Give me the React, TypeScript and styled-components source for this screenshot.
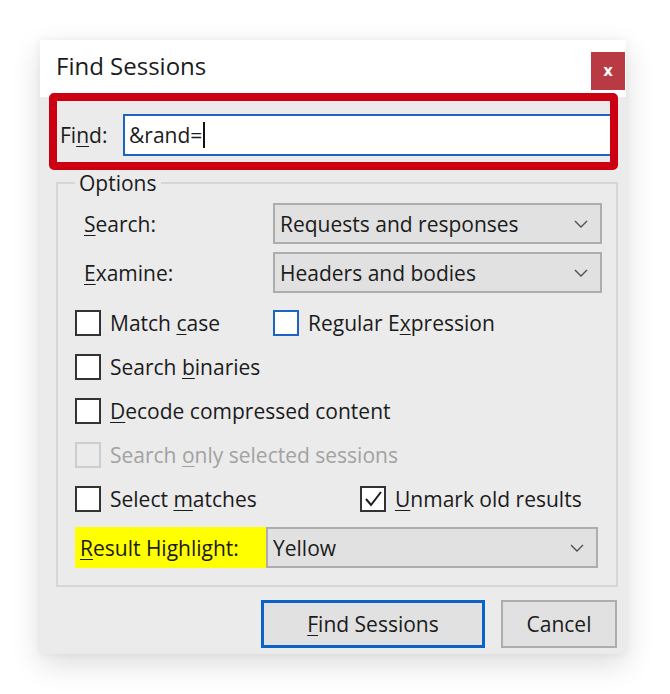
import React from 'react'
import styled, { createGlobalStyle } from 'styled-components'

const GlobalStyle = createGlobalStyle`
    html, body {
        margin: 0;
        padding: 0;
        background: #ffffff;
    }
    body {
        font-family: "Open Sans", "Noto Sans", sans-serif;
        color: #1b1b1b;
    }
`

const Chevron = () => (
    <svg width="14" height="8" viewBox="0 0 14 8">
        <polyline points="1,1 7,7 13,1" fill="none" stroke="#505050" strokeWidth="1.4" />
    </svg>
)

const Check = () => (
    <svg width="22" height="22" viewBox="0 0 22 22">
        <polyline points="4,11 9,17 19,4" fill="none" stroke="#1b1b1b" strokeWidth="2" />
    </svg>
)

const Select: React.FC<{ value: string; trim?: boolean }> = ({ value, trim }) => (
    <SelectBox $trim={trim}>
        <span>{value}</span>
        <Chevron />
    </SelectBox>
)

const CheckItem: React.FC<{
    checked?: boolean
    focused?: boolean
    disabled?: boolean
    children: React.ReactNode
}> = ({ checked, focused, disabled, children }) => (
    <CheckLabel $disabled={disabled}>
        <Box $focused={focused} $disabled={disabled}>
            {checked && <Check />}
        </Box>
        <span>{children}</span>
    </CheckLabel>
)

const App: React.FC = () => {
    return (
        <Page>
            <GlobalStyle />
            <Dialog>
                <TitleBar>
                    <Title>Find Sessions</Title>
                    <CloseButton>x</CloseButton>
                </TitleBar>

                <FindBox>
                    <FindLabel>Fi<U>n</U>d:</FindLabel>
                    <TextField>
                        &amp;rand=
                        <Caret />
                    </TextField>
                </FindBox>

                <Options>
                    <Legend>Options</Legend>

                    <Fields>
                        <FieldRow>
                            <FieldLabel><U>S</U>earch:</FieldLabel>
                            <Select value="Requests and responses" />
                        </FieldRow>
                        <FieldRow>
                            <FieldLabel><U>E</U>xamine:</FieldLabel>
                            <Select value="Headers and bodies" />
                        </FieldRow>
                    </Fields>

                    <Checks>
                        <CheckRow $split={198}>
                            <CheckItem>Match <U>c</U>ase</CheckItem>
                            <CheckItem focused>Regular E<U>x</U>pression</CheckItem>
                        </CheckRow>
                        <CheckRow>
                            <CheckItem>Search <U>b</U>inaries</CheckItem>
                        </CheckRow>
                        <CheckRow>
                            <CheckItem><U>D</U>ecode compressed content</CheckItem>
                        </CheckRow>
                        <CheckRow>
                            <CheckItem disabled>Search <U>o</U>nly selected sessions</CheckItem>
                        </CheckRow>
                        <CheckRow $split={285}>
                            <CheckItem>Select <U>m</U>atches</CheckItem>
                            <CheckItem checked><U>U</U>nmark old results</CheckItem>
                        </CheckRow>
                    </Checks>

                    <ResultRow>
                        <Highlight><U>R</U>esult Highlight:</Highlight>
                        <Select value="Yellow" trim />
                    </ResultRow>
                </Options>

                <Buttons>
                    <Button $primary><U>F</U>ind Sessions</Button>
                    <Button>Cancel</Button>
                </Buttons>
            </Dialog>
        </Page>
    )
}

export default App

const Page = styled.div`
    padding: 40px 0 40px 40px;
`

const Dialog = styled.div`
    width: 586px;
    height: 614px;
    box-sizing: border-box;
    background: #ebebeb;
    display: flex;
    flex-direction: column;
    box-shadow: 0 10px 28px rgba(0, 0, 0, 0.14), 0 0 8px rgba(0, 0, 0, 0.05);
`

const TitleBar = styled.div`
    height: 57px;
    background: #ffffff;
    display: flex;
    justify-content: space-between;
    align-items: flex-start;
    padding-left: 16px;
`

const Title = styled.div`
    font-size: 24px;
    line-height: 30px;
    margin-top: 11px;
    color: #1b1b1b;
`

const CloseButton = styled.div`
    width: 34px;
    height: 38px;
    margin: 12px 1px 0 0;
    background: #b83a42;
    color: #ffffff;
    font-family: "DejaVu Sans", sans-serif;
    font-weight: bold;
    font-size: 15px;
    display: flex;
    align-items: center;
    justify-content: center;
`

const U = styled.span`
    text-decoration: underline;
    text-underline-offset: 3px;
    text-decoration-thickness: 1px;
`

const FindBox = styled.div`
    margin: -4px 8px 0 9px;
    border: 8px solid #cc0012;
    border-radius: 5px;
    background: #ebebeb;
    display: flex;
    align-items: center;
    padding: 13px 0 6px 3px;
`

const FindLabel = styled.div`
    width: 63px;
    font-size: 21px;
`

const TextField = styled.div`
    flex: 1;
    height: 42px;
    box-sizing: border-box;
    border: 2px solid #1d63c0;
    border-right: none;
    background: #ffffff;
    display: flex;
    align-items: center;
    padding-left: 4px;
    font-size: 21px;
`

const Caret = styled.span`
    width: 2px;
    height: 26px;
    margin-left: 1px;
    background: #111111;
`

const Options = styled.fieldset`
    margin: 0 8px 0 16px;
    border: 2px solid #d6d6d6;
    padding: 7px 14px 18px 17px;
    min-width: 0;
    display: flex;
    flex-direction: column;
`

const Legend = styled.legend`
    margin-left: 0;
    padding: 0 4px;
    font-size: 21px;
    line-height: 26px;
`

const Fields = styled.div`
    display: flex;
    flex-direction: column;
    gap: 8px;
`

const FieldRow = styled.div`
    display: grid;
    grid-template-columns: 198px 1fr;
    align-items: center;
`

const FieldLabel = styled.div`
    padding-left: 9px;
    font-size: 21px;
`

const SelectBox = styled.div<{ $trim?: boolean }>`
    height: 41px;
    box-sizing: border-box;
    margin-right: ${p => (p.$trim ? '4px' : '0')};
    border: 2px solid #adadad;
    background: #e1e1e1;
    display: flex;
    align-items: center;
    justify-content: space-between;
    padding: 0 12px 0 5px;
    font-size: 21px;
`

const Checks = styled.div`
    display: flex;
    flex-direction: column;
    gap: 18px;
    margin-top: 17px;
`

const CheckRow = styled.div<{ $split?: number }>`
    display: grid;
    grid-template-columns: ${p => (p.$split ? `${p.$split}px 1fr` : '1fr')};
    align-items: center;
    height: 26px;
`

const CheckLabel = styled.div<{ $disabled?: boolean }>`
    display: flex;
    align-items: center;
    gap: 9px;
    font-size: 21px;
    line-height: 26px;
    color: ${p => (p.$disabled ? '#a2a2a2' : '#1b1b1b')};
`

const Box = styled.div<{ $focused?: boolean; $disabled?: boolean }>`
    width: 26px;
    height: 26px;
    box-sizing: border-box;
    flex-shrink: 0;
    border: 2px solid ${p => (p.$focused ? '#1d63c0' : p.$disabled ? '#cdcdcd' : '#333333')};
    background: ${p => (p.$disabled ? '#ebebeb' : '#ffffff')};
    display: flex;
    align-items: center;
    justify-content: center;
`

const ResultRow = styled.div`
    display: grid;
    grid-template-columns: 191px 1fr;
    margin-top: 15px;
    height: 40px;
`

const Highlight = styled.div`
    background: #ffff00;
    display: flex;
    align-items: center;
    padding-left: 5px;
    font-size: 21px;
`

const Buttons = styled.div`
    display: flex;
    justify-content: flex-end;
    gap: 16px;
    margin: 13px 9px 0 0;
`

const Button = styled.div<{ $primary?: boolean }>`
    width: ${p => (p.$primary ? '224px' : '116px')};
    height: 48px;
    box-sizing: border-box;
    border: ${p => (p.$primary ? '3px solid #0b62c8' : '2px solid #adadad')};
    background: #e1e1e1;
    display: flex;
    align-items: center;
    justify-content: center;
    font-size: 21px;
`
